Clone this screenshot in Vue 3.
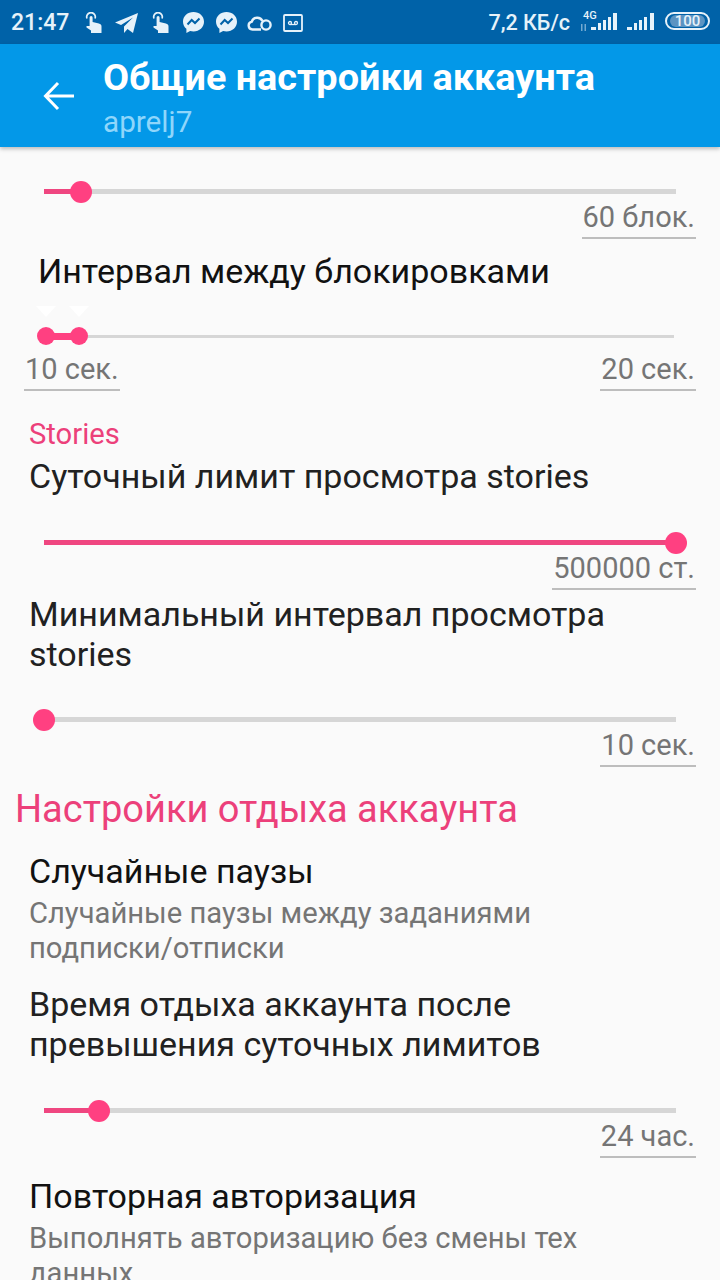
<template>
  <div class="screen">
    <header class="status-bar">
      <span class="clock">21:47</span>
      <div class="status-icons">
        <svg class="ic hand" width="17" height="21" viewBox="0 0 17 21">
          <path fill="none" stroke="#e6f2fa" stroke-width="1.700" d="M2 6.500a4.300 4.300 0 1 1 8 0"/>
          <path fill="#e6f2fa" d="M4.600 5.500a1.500 1.500 0 0 1 3 0V10l6.300 1.500c1.600.4 2.600 1.400 2.600 2.900V21H6v-2.500L1.500 15.500V14h3.100z"/>
        </svg>
        <svg class="ic tg" width="23" height="20" viewBox="0 0 23 20" fill="#e6f2fa">
          <path d="M23 0 0 9.500l6 2.500L18 4.500 9 13.500V20l3.500-4 5.500 4z"/>
        </svg>
        <svg class="ic hand" width="17" height="21" viewBox="0 0 17 21">
          <path fill="none" stroke="#e6f2fa" stroke-width="1.700" d="M2 6.500a4.300 4.300 0 1 1 8 0"/>
          <path fill="#e6f2fa" d="M4.600 5.500a1.500 1.500 0 0 1 3 0V10l6.300 1.500c1.600.4 2.600 1.400 2.600 2.900V21H6v-2.500L1.500 15.500V14h3.100z"/>
        </svg>
        <svg class="ic msg" width="21" height="21" viewBox="0 0 21 21">
          <path fill="#e6f2fa" d="M10.500 0C4.600 0 0 4.200 0 9.700c0 2.900 1.300 5.400 3.400 7.100V21l3.700-2.100c1.100.3 2.200.5 3.400.5 5.900 0 10.500-4.200 10.500-9.700S16.400 0 10.500 0z"/>
          <path fill="none" stroke="#0062a8" stroke-width="2" d="M4.500 12.500 8.700 8l3.300 3 4.500-4.500"/>
        </svg>
        <svg class="ic msg" width="21" height="21" viewBox="0 0 21 21">
          <path fill="#e6f2fa" d="M10.500 0C4.600 0 0 4.200 0 9.700c0 2.900 1.300 5.400 3.400 7.100V21l3.700-2.100c1.100.3 2.200.5 3.400.5 5.900 0 10.500-4.200 10.500-9.700S16.400 0 10.500 0z"/>
          <path fill="none" stroke="#0062a8" stroke-width="2" d="M4.500 12.500 8.700 8l3.300 3 4.500-4.500"/>
        </svg>
        <svg class="ic cloud" width="25" height="16" viewBox="0 0 25 16" fill="none" stroke="#e6f2fa" stroke-width="2.400">
          <path d="M14 14.500H5.500a4 4 0 0 1-.7-7.900A5.800 5.800 0 0 1 15.500 6"/>
          <circle cx="19" cy="10" r="4.600"/>
        </svg>
        <svg class="ic tape" width="20" height="18" viewBox="0 0 20 18" fill="none" stroke="#e6f2fa">
          <rect x="1" y="1" width="18" height="16" rx="1" stroke-width="1.800"/>
          <circle cx="7" cy="9" r="1.500" stroke-width="1.300"/>
          <circle cx="13" cy="9" r="1.500" stroke-width="1.300"/>
          <path d="M7 10.500h6" stroke-width="1.300"/>
        </svg>
      </div>
      <div class="status-right">
        <span class="speed">7,2 КБ/с</span>
        <div class="net">
          <span class="net-type">4G</span>
          <svg width="38" height="20" viewBox="0 0 38 20" fill="#e6f2fa">
            <path opacity=".5" d="M1 12h1.500v7H1zM4.500 12H6v7H4.500z"/>
            <path d="M11 15h5v3h-5zM18 11h3v7h-3zM23 8h3v10h-3zM28 5h3v13h-3zM33 1h4v17h-4z"/>
          </svg>
        </div>
        <svg class="signal" width="28" height="20" viewBox="0 0 28 20" fill="#e6f2fa">
          <path d="M0 15h5v3H0zM7 11h3v7H7zM12 8h3v10h-3zM17 5h3v13h-3zM23 1h4v17h-4z"/>
        </svg>
        <div class="battery"><span>100</span></div>
      </div>
    </header>

    <div class="app-bar">
      <svg class="back" width="32" height="32" viewBox="0 0 32 32" fill="none" stroke="#fff" stroke-width="3">
        <path d="M31 16H3M15 3 2.500 16 15 29" />
      </svg>
      <div class="titles">
        <div class="title">Общие настройки аккаунта</div>
        <div class="subtitle">aprelj7</div>
      </div>
    </div>

    <main class="content">
      <section class="slider-row first">
        <div class="track"><i class="fill" :style="{ width: '37px' }"></i><i class="thumb" :style="{ left: '37px' }"></i></div>
        <div class="value-line"><span class="value">60 блок.</span></div>
      </section>

      <h3 class="label interval">Интервал между блокировками</h3>
      <section class="range-row">
        <div class="range-track">
          <i class="range-fill"></i>
          <i class="range-thumb a"></i>
          <i class="range-thumb b"></i>
          <i class="tick a"></i>
          <i class="tick b"></i>
        </div>
        <div class="range-values">
          <span class="value">10 сек.</span>
          <span class="value">20 сек.</span>
        </div>
      </section>

      <div class="group-title">Stories</div>
      <h3 class="label stories">Суточный лимит просмотра stories</h3>
      <section class="slider-row daily">
        <div class="track"><i class="fill" :style="{ width: '632px' }"></i><i class="thumb" :style="{ left: '632px' }"></i></div>
        <div class="value-line"><span class="value">500000 ст.</span></div>
      </section>

      <h3 class="label multi">Минимальный интервал просмотра stories</h3>
      <section class="slider-row min-int">
        <div class="track"><i class="thumb" :style="{ left: '0px' }"></i></div>
        <div class="value-line"><span class="value">10 сек.</span></div>
      </section>

      <h2 class="section-title">Настройки отдыха аккаунта</h2>

      <div class="pref pauses">
        <h3 class="label black">Случайные паузы</h3>
        <p class="hint">Случайные паузы между заданиями подписки/отписки</p>
      </div>

      <h3 class="label multi rest">Время отдыха аккаунта после превышения суточных лимитов</h3>
      <section class="slider-row rest-slider">
        <div class="track"><i class="fill" :style="{ width: '55px' }"></i><i class="thumb" :style="{ left: '55px' }"></i></div>
        <div class="value-line"><span class="value">24 час.</span></div>
      </section>

      <div class="pref reauth">
        <h3 class="label black">Повторная авторизация</h3>
        <p class="hint">Выполнять авторизацию без смены тех данных</p>
      </div>
    </main>
  </div>
</template>

<script setup>
</script>

<style>
html, body { margin: 0; background: #fafafa; }
</style>

<style scoped>
.screen {
  width: 720px;
  height: 1280px;
  overflow: hidden;
  background: #fafafa;
  font-family: Roboto, "Noto Sans", sans-serif;
  position: relative;
}

.status-bar {
  height: 44px;
  background: #0062a8;
  display: flex;
  align-items: center;
  padding: 0 10px 0 11px;
  box-sizing: border-box;
  color: #e6f2fa;
}
.clock { font-size: 23px; font-weight: 500; width: 74px; }
.status-icons { display: flex; align-items: center; margin-top: 1px; }
.ic { display: block; }
.hand { margin-right: 13px; }
.tg { margin-right: 14px; }
.tg + .hand { margin-right: 14px; }
.msg { margin-right: 12px; }
.msg + .msg { margin-right: 10px; }
.cloud { margin-right: 11px; }
.status-right { margin-left: auto; display: flex; align-items: center; }
.speed { font-size: 21.500px; font-weight: 500; margin-right: 10px; }
.net { position: relative; width: 38px; height: 20px; margin-right: 9px; }
.net svg { display: block; }
.net-type { position: absolute; left: 3px; top: -3px; font-size: 11px; font-weight: 500; line-height: 13px; }
.signal { margin-right: 10px; display: block; }
.battery {
  width: 41px;
  height: 14px;
  margin-top: -2px;
  border: 2px solid #e6f2fa;
  border-radius: 10px;
  display: flex;
  align-items: center;
  justify-content: center;
}
.battery span {
  width: 35px;
  height: 12px;
  border-radius: 7px;
  background: #5b94c2;
  font-size: 15px;
  font-weight: 500;
  line-height: 12px;
  text-align: center;
}

.app-bar {
  height: 103px;
  background: #0398e8;
  display: flex;
  align-items: flex-start;
  box-shadow: 0 2px 4px rgba(0, 0, 0, 0.25);
  position: relative;
}
.back { margin: 36px 0 0 43px; }
.titles { margin-left: 28px; }
.title { color: #fff; font-size: 37.850px; font-weight: 700; line-height: 40px; margin-top: 13px; }
.subtitle { color: #8fd6fb; font-size: 29.700px; line-height: 36px; margin-top: 7px; }

.content { display: flex; flex-direction: column; }

.track {
  position: relative;
  margin: 0 44px;
  height: 5px;
  background: #d6d6d6;
}
.fill { position: absolute; left: 0; top: 0; height: 5px; background: #ef4680; }
.thumb {
  position: absolute;
  top: -8.500px;
  width: 22px;
  height: 22px;
  margin-left: -11px;
  border-radius: 50%;
  background: #ff4081;
}
.value-line { display: flex; justify-content: flex-end; padding-right: 24px; margin-top: 7px; }
.value {
  color: #757575;
  font-size: 29px;
  line-height: 33px;
  border-bottom: 2px solid #bdbdbd;
  padding: 0 1px 3px;
  text-align: right;
}

.first { margin-top: 42px; }

.label { margin: 0; font-weight: 400; font-size: 34px; line-height: 40px; color: #212121; padding-left: 29px; padding-right: 90px; }
.interval { margin-top: 12px; padding-left: 38px; color: #111; }

.range-row { margin-top: 44px; }
.range-track { position: relative; margin: 0 46px; height: 3px; background: #d6d6d6; }
.range-fill { position: absolute; left: 0; top: -2px; width: 33px; height: 7px; background: #ff4081; }
.range-thumb { position: absolute; top: -8px; width: 18px; height: 18px; margin-left: -9px; border-radius: 50%; background: #ff4081; }
.range-thumb.a { left: 0; }
.range-thumb.b { left: 33px; }
.tick { position: absolute; top: -29px; width: 0; height: 0; margin-left: -10px; border: 10px solid transparent; border-top: 11px solid #fff; border-bottom: 0; }
.tick.a { left: 0; }
.tick.b { left: 33px; }
.range-values { display: flex; justify-content: space-between; padding: 0 24px; margin-top: 15px; }

.group-title { color: #ec407a; font-size: 29.200px; line-height: 34px; padding-left: 29px; margin-top: 26px; }
.stories { margin-top: 5px; }
.daily { margin-top: 44px; }
.multi { margin-top: 4px; }
.min-int { margin-top: 43px; }

.section-title {
  margin: 20px 0 0;
  padding-left: 15px;
  color: #ec407a;
  font-size: 38px;
  font-weight: 400;
  line-height: 44px;
}

.pref { padding-left: 29px; }
.pref .label { padding: 0; }
.black { color: #111; }
.hint { margin: 5px 0 0; color: #757575; font-size: 29.200px; line-height: 35px; width: 600px; }
.pauses { margin-top: 20px; }
.rest { margin-top: 18px; }
.rest-slider { margin-top: 44px; }
.reauth { margin-top: 18px; }
</style>
